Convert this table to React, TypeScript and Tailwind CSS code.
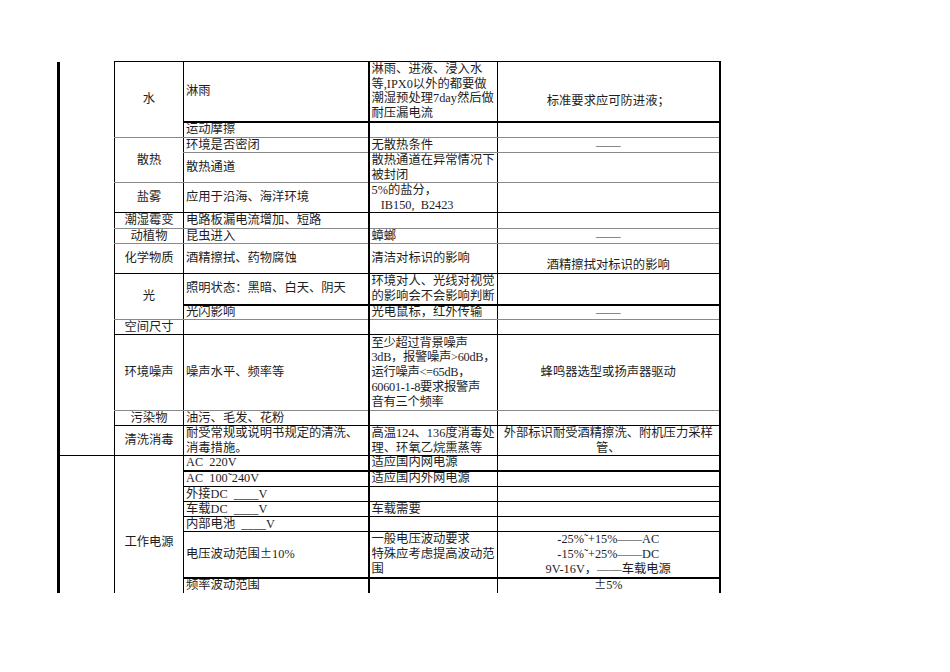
import type { ReactNode } from 'react';

type Line = 'thick' | 'dark' | 'gray' | 'none';

const lineCls: Record<Line, string> = {
    thick: 'border-b-2 border-b-black',
    dark: 'border-b border-b-black',
    gray: 'border-b border-b-[#8a8a8a]',
    none: '',
};

// column edge styles (spreadsheet look)
const colCls = [
    'border-l-[3px] border-l-black',
    'border-l border-l-black text-center',
    'border-l border-l-black text-left',
    'border-l-2 border-l-black text-left',
    'border-l border-l-black border-r-2 border-r-black text-center',
];

function Td({
    col,
    line = 'gray',
    rowSpan,
    className = '',
    children,
}: {
    col: number;
    line?: Line;
    rowSpan?: number;
    className?: string;
    children?: ReactNode;
}) {
    return (
        <td
            rowSpan={rowSpan}
            className={`px-[2px] py-0 align-middle whitespace-nowrap overflow-hidden ${colCls[col]} ${lineCls[line]} ${className}`}
        >
            {children}
        </td>
    );
}

// full-width plus/minus as in the sheet
const PM = () => <span className="font-['Noto_Sans_CJK_SC',sans-serif] leading-[0]">±</span>;

export default function App() {
    return (
        <div className="w-[950px] h-[672px] bg-white pt-[61px] pl-[57px] font-['Liberation_Serif','Noto_Sans_CJK_SC',serif] text-[12.3px] leading-[13px] text-[#1e1e1e]">
            <table className="table-fixed border-collapse w-[661px]">
                <colgroup>
                    <col className="w-[56px]" />
                    <col className="w-[69px]" />
                    <col className="w-[185px]" />
                    <col className="w-[129px]" />
                    <col className="w-[222px]" />
                </colgroup>
                <tbody>
                    {/* 水 */}
                    <tr className="h-[60px]">
                        <Td col={0} rowSpan={14} line="dark" />
                        <Td col={1} rowSpan={2} className="border-t border-t-black">水</Td>
                        <Td col={2} line="thick" className="border-t border-t-black">淋雨</Td>
                        <Td col={3} line="thick" className="border-t border-t-black leading-[14.4px]">
                            淋雨、进液、浸入水<br />等,IPX0以外的都要做<br />潮湿预处理7day然后做<br />耐压漏电流
                        </Td>
                        <Td col={4} line="thick" className="border-t border-t-black !align-top pt-[33px]">标准要求应可防进液；</Td>
                    </tr>
                    <tr className="h-[16px]">
                        <Td col={2}>运动摩擦</Td>
                        <Td col={3} />
                        <Td col={4} />
                    </tr>

                    {/* 散热 */}
                    <tr className="h-[15px]">
                        <Td col={1} rowSpan={2}>散热</Td>
                        <Td col={2}>环境是否密闭</Td>
                        <Td col={3}>无散热条件</Td>
                        <Td col={4}>——</Td>
                    </tr>
                    <tr className="h-[30px]">
                        <Td col={2}>散热通道</Td>
                        <Td col={3} className="leading-[14.4px]">散热通道在异常情况下<br />被封闭</Td>
                        <Td col={4} />
                    </tr>

                    <tr className="h-[30px]">
                        <Td col={1} line="dark">盐雾</Td>
                        <Td col={2} line="dark">应用于沿海、海洋环境</Td>
                        <Td col={3} line="dark" className="whitespace-pre leading-[14.4px]">{'5%的盐分，\n   IB150,  B2423'}</Td>
                        <Td col={4} line="dark" />
                    </tr>
                    <tr className="h-[16px]">
                        <Td col={1}>潮湿霉变</Td>
                        <Td col={2}>电路板漏电流增加、短路</Td>
                        <Td col={3} />
                        <Td col={4} />
                    </tr>
                    <tr className="h-[15px]">
                        <Td col={1}>动植物</Td>
                        <Td col={2}>昆虫进入</Td>
                        <Td col={3}>蟑螂</Td>
                        <Td col={4}>——</Td>
                    </tr>
                    <tr className="h-[30px]">
                        <Td col={1} line="dark">化学物质</Td>
                        <Td col={2} line="dark">酒精擦拭、药物腐蚀</Td>
                        <Td col={3} line="dark">清洁对标识的影响</Td>
                        <Td col={4} line="dark" className="!align-bottom pb-[1px]">酒精擦拭对标识的影响</Td>
                    </tr>

                    {/* 光 */}
                    <tr className="h-[31px]">
                        <Td col={1} rowSpan={2}>光</Td>
                        <Td col={2} line="thick">照明状态：黑暗、白天、阴天</Td>
                        <Td col={3} line="thick" className="leading-[14.4px]">环境对人、光线对视觉<br />的影响会不会影响判断</Td>
                        <Td col={4} line="thick" />
                    </tr>
                    <tr className="h-[15px]">
                        <Td col={2}>光闪影响</Td>
                        <Td col={3}>光电鼠标，红外传输</Td>
                        <Td col={4}>——</Td>
                    </tr>

                    <tr className="h-[15px]">
                        <Td col={1} line="dark">空间尺寸</Td>
                        <Td col={2} line="dark" />
                        <Td col={3} line="dark" />
                        <Td col={4} line="dark" />
                    </tr>
                    <tr className="h-[76px]">
                        <Td col={1}>环境噪声</Td>
                        <Td col={2}>噪声水平、频率等</Td>
                        <Td col={3} className="leading-[14.8px] tracking-[-0.3px]">
                            至少超过背景噪声<br />3dB，报警噪声&gt;60dB，<br />运行噪声&lt;=65dB，<br />60601-1-8要求报警声<br />音有三个频率
                        </Td>
                        <Td col={4}>蜂鸣器选型或扬声器驱动</Td>
                    </tr>
                    <tr className="h-[15px]">
                        <Td col={1} line="dark">污染物</Td>
                        <Td col={2} line="dark">油污、毛发、花粉</Td>
                        <Td col={3} line="dark" />
                        <Td col={4} line="dark" />
                    </tr>
                    <tr className="h-[30px]">
                        <Td col={1} line="dark">清洗消毒</Td>
                        <Td col={2} line="dark" className="leading-[14.4px]">耐受常规或说明书规定的清洗、<br />消毒措施。</Td>
                        <Td col={3} line="dark" className="leading-[14.4px]">高温124、136度消毒处<br />理、环氧乙烷熏蒸等</Td>
                        <Td col={4} line="dark" className="leading-[14.4px]">外部标识耐受酒精擦洗、附机压力采样<br />管、</Td>
                    </tr>

                    {/* 工作电源 */}
                    <tr className="h-[15px]">
                        <Td col={0} rowSpan={7} line="none" />
                        <Td col={1} rowSpan={7} line="none" className="!align-top pt-[80px]">工作电源</Td>
                        <Td col={2} line="thick" className="whitespace-pre">AC  220V</Td>
                        <Td col={3} line="thick">适应国内网电源</Td>
                        <Td col={4} line="thick" />
                    </tr>
                    <tr className="h-[16px]">
                        <Td col={2} line="dark" className="whitespace-pre">AC  100˜240V</Td>
                        <Td col={3} line="dark">适应国内外网电源</Td>
                        <Td col={4} line="dark" />
                    </tr>
                    <tr className="h-[15px]">
                        <Td col={2} line="dark" className="whitespace-pre">外接DC  ____V</Td>
                        <Td col={3} line="dark" />
                        <Td col={4} line="dark" />
                    </tr>
                    <tr className="h-[15px]">
                        <Td col={2} line="dark" className="whitespace-pre">车载DC  ____V</Td>
                        <Td col={3} line="dark">车载需要</Td>
                        <Td col={4} line="dark" />
                    </tr>
                    <tr className="h-[15px]">
                        <Td col={2} line="dark" className="whitespace-pre">内部电池  ____V</Td>
                        <Td col={3} line="dark" />
                        <Td col={4} line="dark" />
                    </tr>
                    <tr className="h-[46px]">
                        <Td col={2} line="thick" className="!overflow-visible">电压波动范围<PM />10%</Td>
                        <Td col={3} line="thick" className="leading-[14.6px]">一般电压波动要求<br />特殊应考虑提高波动范<br />围</Td>
                        <Td col={4} line="thick" className="leading-[14.6px]">-25%˜+15%——AC<br />-15%˜+25%——DC<br />9V-16V，——车载电源</Td>
                    </tr>
                    <tr className="h-[15px]">
                        <Td col={2} line="none">频率波动范围</Td>
                        <Td col={3} line="none" />
                        <Td col={4} line="none" className="!overflow-visible"><PM />5%</Td>
                    </tr>
                </tbody>
            </table>
        </div>
    );
}
